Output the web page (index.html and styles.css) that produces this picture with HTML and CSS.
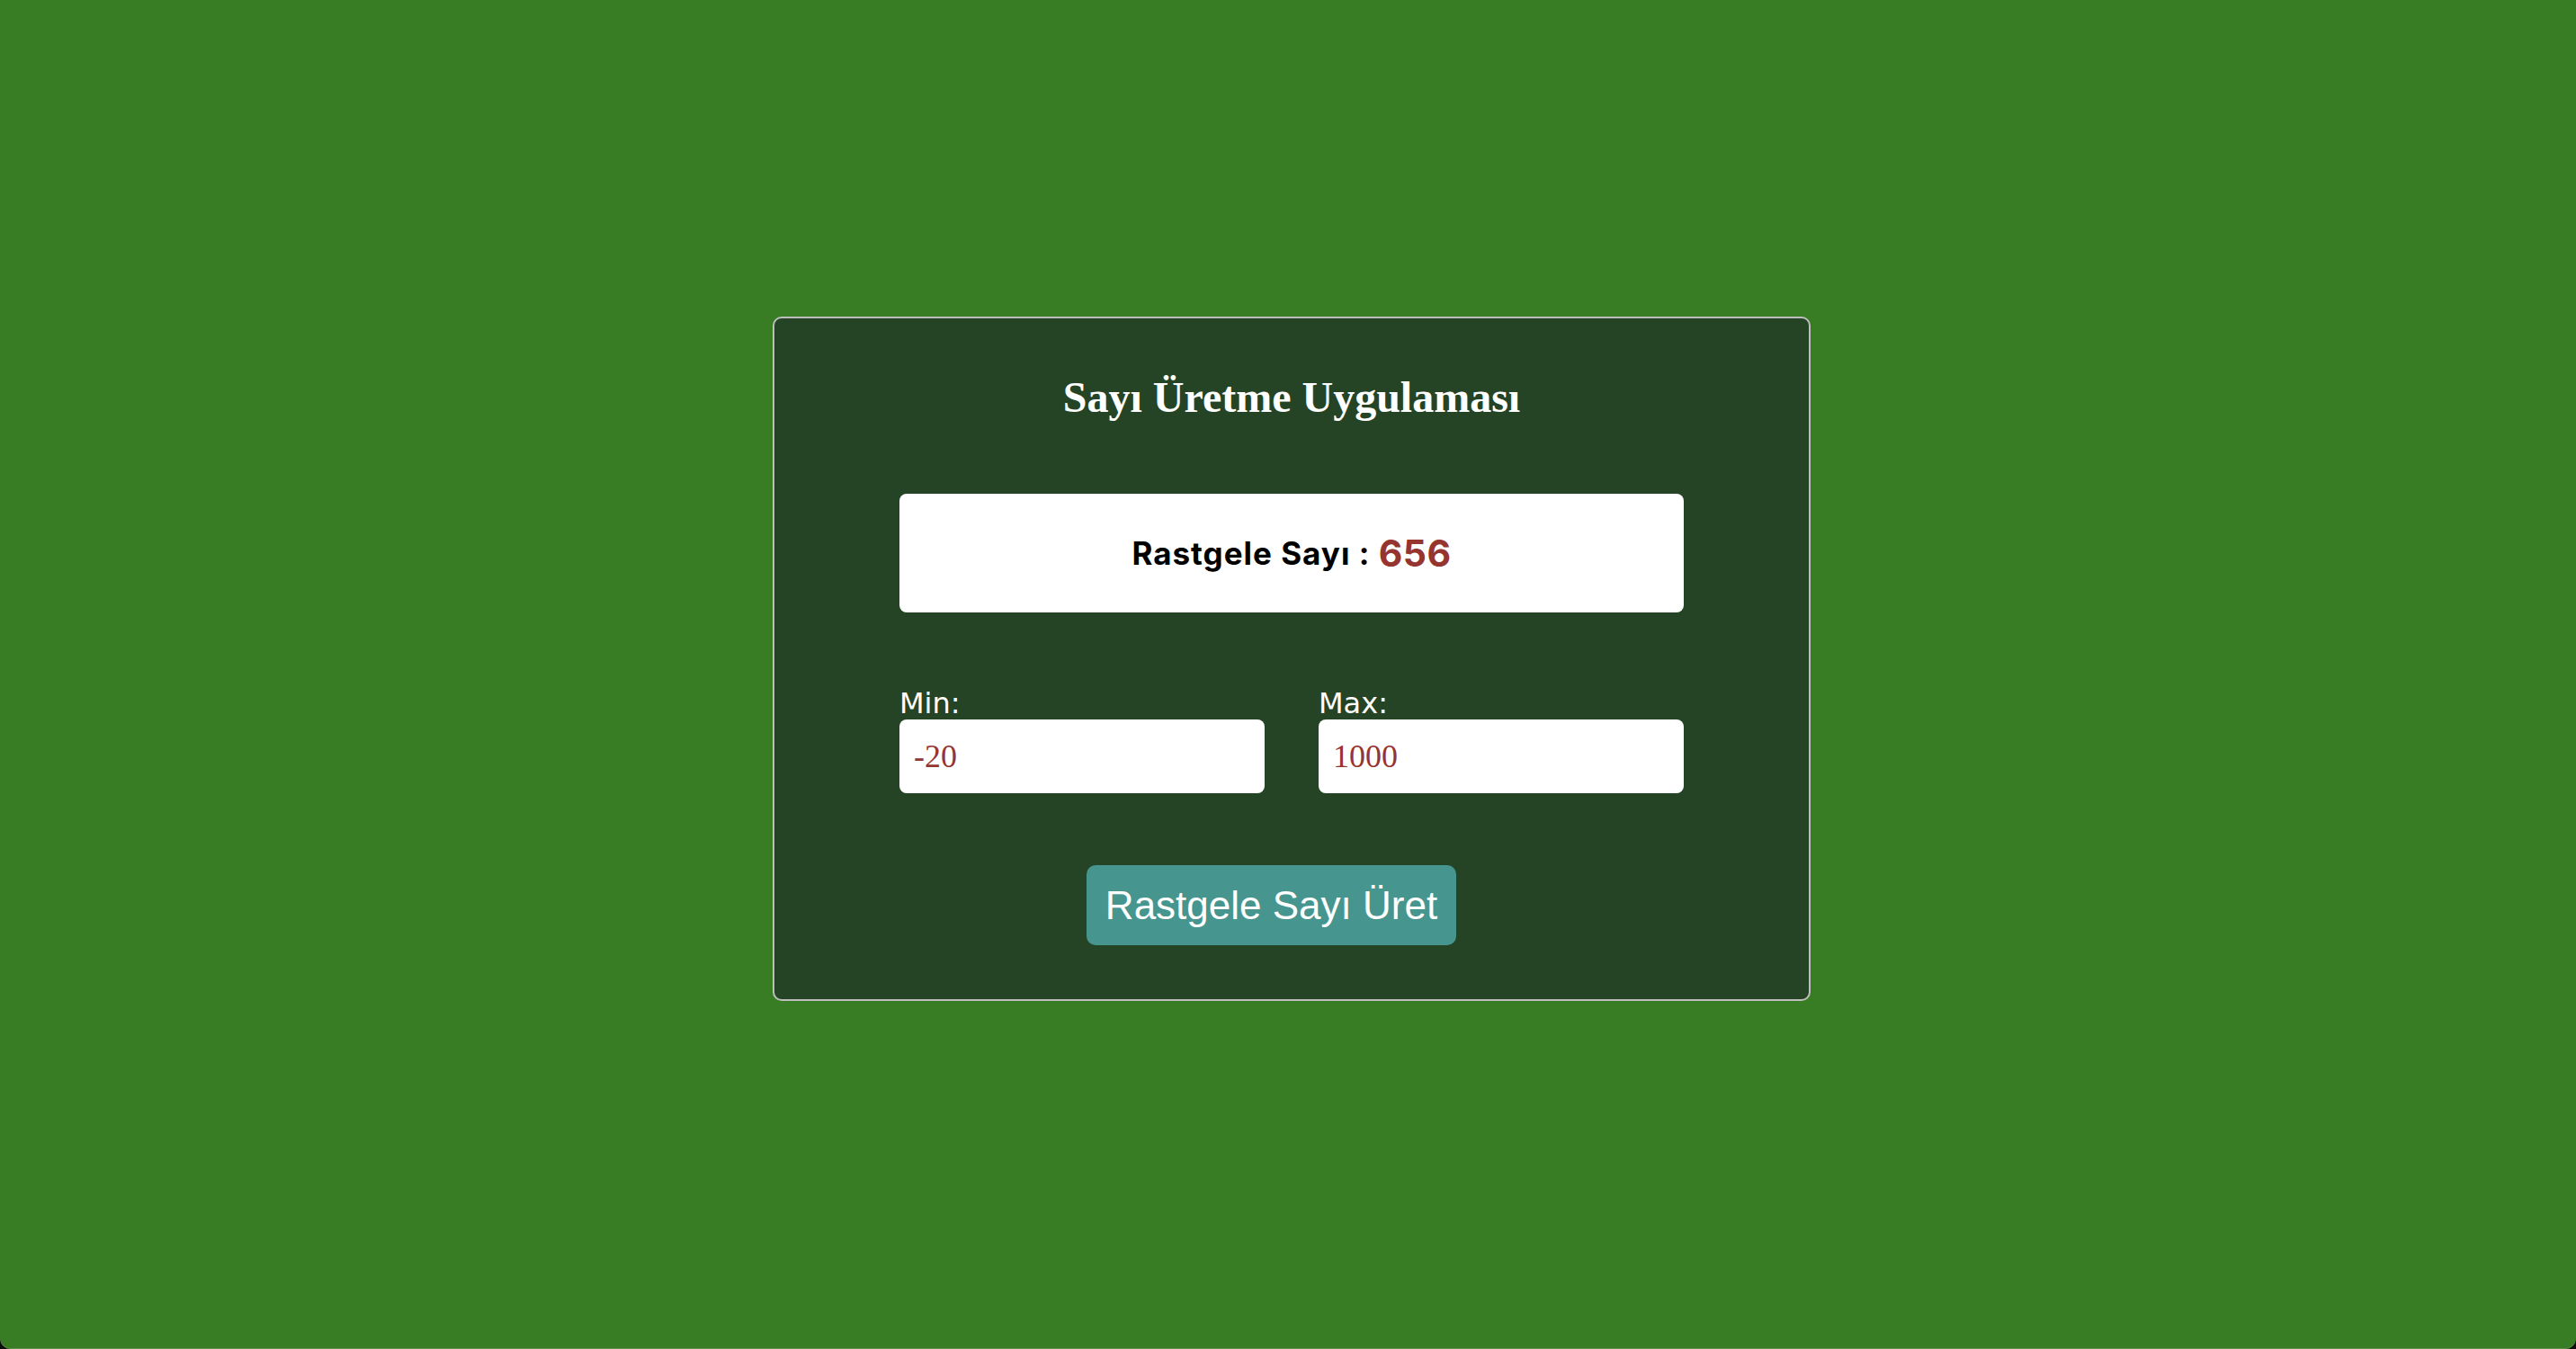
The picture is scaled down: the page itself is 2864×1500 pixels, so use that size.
FILE: index.html
```html
<!DOCTYPE html>
<html lang="tr">
<head>
<meta charset="utf-8">
<title>Sayı Üretme Uygulaması</title>
<link rel="stylesheet" href="styles.css">
</head>
<body>
<main class="page">
  <section class="card">
    <h1 class="title">Sayı Üretme Uygulaması</h1>
    <div class="result">
      <span class="result-label">Rastgele Sayı : </span><span class="result-value">656</span>
    </div>
    <div class="range">
      <div class="field">
        <label class="field-label" for="min">Min:</label>
        <input class="field-input" id="min" type="number" value="-20">
      </div>
      <div class="field">
        <label class="field-label" for="max">Max:</label>
        <input class="field-input" id="max" type="number" value="1000">
      </div>
    </div>
    <div class="actions">
      <button class="btn" type="button">Rastgele Sayı Üret</button>
    </div>
  </section>
</main>
</body>
</html>
```

FILE: styles.css
```css
html {
  margin: 0;
  background: #0d0d0d;
}
body {
  margin: 0;
  background: #387d23;
  min-height: 1500px;
  border-radius: 0 0 12px 12px;
  box-shadow: inset 0 -1px 0 rgba(255, 255, 255, 0.18);
}
.page {
  display: flex;
  justify-content: center;
  padding: 352px 0 0 8px;
}
.card {
  box-sizing: border-box;
  width: 1154px;
  background: #254426;
  border: 2px solid #bdbdbd;
  border-radius: 10px;
  padding: 60px 139px 60px;
}
.title {
  margin: 0;
  font-family: "Liberation Serif", "Times New Roman", serif;
  font-weight: 700;
  font-size: 48px;
  line-height: 56px;
  color: #ffffff;
  text-align: center;
}
.result {
  margin-top: 79px;
  height: 132px;
  background: #ffffff;
  border-radius: 8px;
  display: flex;
  align-items: center;
  justify-content: center;
  font-family: Inter, "Noto Sans", sans-serif;
  font-weight: 700;
}
.result-label {
  font-size: 35px;
  letter-spacing: 1px;
  color: #000000;
  white-space: pre;
}
.result-value {
  font-size: 41px;
  letter-spacing: 0.5px;
  color: #96352f;
}
.range {
  margin-top: 83px;
  display: flex;
  gap: 60px;
}
.field {
  flex: 1 1 0;
  min-width: 0;
  display: flex;
  flex-direction: column;
}
.field-label {
  font-family: "DejaVu Sans", Verdana, sans-serif;
  font-size: 32px;
  line-height: 36px;
  color: #ffffff;
}
.field-input {
  box-sizing: border-box;
  width: 100%;
  min-width: 0;
  height: 82px;
  border: none;
  border-radius: 8px;
  background: #ffffff;
  padding: 0 16px;
  font-family: "Liberation Serif", "Times New Roman", serif;
  font-size: 36px;
  color: #96352f;
  outline: none;
  -moz-appearance: textfield;
  appearance: textfield;
}
.field-input::-webkit-outer-spin-button,
.field-input::-webkit-inner-spin-button {
  -webkit-appearance: none;
  margin: 0;
}
.actions {
  margin-top: 80px;
  display: flex;
  justify-content: center;
  padding-right: 45px;
}
.btn {
  box-sizing: border-box;
  height: 89px;
  padding: 0 21px;
  border: none;
  border-radius: 10px;
  background: #46968f;
  color: #ffffff;
  font-family: "Liberation Sans", Arial, sans-serif;
  font-size: 44px;
  cursor: pointer;
}
```
